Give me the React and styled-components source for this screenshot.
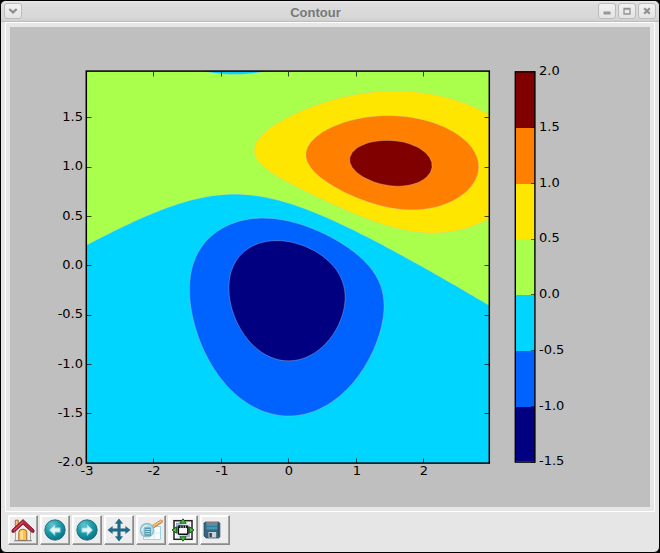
import React from "react";
import styled, { createGlobalStyle, css } from "styled-components";

const GlobalStyle = createGlobalStyle`
  * { box-sizing: border-box; }
  html, body { margin: 0; padding: 0; background: #000; overflow: hidden; }
`;

const Window = styled.main`
  width: 660px;
  height: 553px;
  display: flex;
  flex-direction: column;
  border: 1px solid #000;
  border-radius: 6px;
  overflow: hidden;
  background: #e6e6e6;
`;

const TitleBar = styled.header`
  height: 21px;
  flex: none;
  display: grid;
  grid-template-columns: 32px 1fr 62px;
  align-items: start;
  padding: 2px 3px 0;
  background: linear-gradient(#ece6ea 0, #dcdcdc 3px, #d8d8d8 16px, #cfcfcf 20px, #bdbdbd 20px);
`;

const Title = styled.h1`
  margin: 0;
  font: bold 13px/17px "Liberation Sans", sans-serif;
  color: #787878;
  text-align: center;
  padding-left: 1px;
  padding-top: 1px;
`;

const ControlGroup = styled.div`
  display: flex;
  gap: 2px;
  justify-content: ${(p) => (p.$end ? "flex-end" : "flex-start")};
`;

const ControlButton = styled.button`
  width: 18px;
  height: 16px;
  padding: 0;
  display: grid;
  place-items: center;
  border: 1px solid #bcbcbc;
  border-radius: 3px;
  background: linear-gradient(#f1f1f1, #e4e4e4);
  svg { display: block; }
`;

const CanvasFrame = styled.section`
  width: 650px;
  height: 490px;
  flex: none;
  margin-left: 4px;
  padding: 4px;
  border: 1px solid #fff;
`;

const Figure = styled.svg`
  display: block;
  background: #bfbfbf;
  font: 13px "DejaVu Sans", sans-serif;
`;

const Toolbar = styled.nav`
  display: flex;
  gap: 2px;
  padding: 3px 7px;
`;

const ToolButton = styled.button`
  width: 30px;
  height: 30px;
  padding: 0;
  display: grid;
  place-items: center;
  border: 1px solid;
  border-color: #fff #8a8a8a #8a8a8a #fff;
  box-shadow: inset -1px -1px #a4a4a4, inset 1px 1px #fff;
  background: #ededed;
  ${(p) => p.$light && css`background: #f7f7f7;`}
  svg { display: block; }
`;

/* ---------- contour data ---------- */

const gaussian = (x, y, sx, sy, mx, my) =>
  Math.exp(-0.5 * (((x - mx) / sx) ** 2 + ((y - my) / sy) ** 2)) / (2 * Math.PI * sx * sy);

const field = (x, y) => 10 * (gaussian(x, y, 1.5, 0.5, 1, 1) - gaussian(x, y, 1, 1, 0, 0));

const PLOT = { left: 76.3, right: 479.3, top: 44.1, bottom: 436.1 };
const X_SCALE = (PLOT.right - PLOT.left) / 5.975;
const Y_SCALE = (PLOT.bottom - PLOT.top) / 3.975;
const px = (x) => PLOT.left + (x + 3) * X_SCALE;
const py = (y) => PLOT.bottom - (y + 2) * Y_SCALE;

const STEP = 0.05;
const X0 = -3.2;
const Y0 = -2.2;
const COLS = 129;
const ROWS = 89;

const grid = Array.from({ length: ROWS }, (_, j) =>
  Array.from({ length: COLS }, (_, i) =>
    i === 0 || j === 0 || i === COLS - 1 || j === ROWS - 1
      ? -99
      : field(X0 + i * STEP, Y0 + j * STEP)
  )
);

// Traces the closed outlines of the region where the field exceeds the level.
function regionPath(level) {
  const points = new Map();
  const links = new Map();
  const crossing = (i1, j1, i2, j2) => {
    const key = `${i1 + i2},${j1 + j2}`;
    if (!points.has(key)) {
      const a = grid[j1][i1];
      const b = grid[j2][i2];
      const t = (level - a) / (b - a);
      points.set(key, [
        px(X0 + (i1 + (i2 - i1) * t) * STEP),
        py(Y0 + (j1 + (j2 - j1) * t) * STEP),
      ]);
      links.set(key, []);
    }
    return key;
  };
  for (let j = 0; j < ROWS - 1; j++) {
    for (let i = 0; i < COLS - 1; i++) {
      const corners = [[i, j], [i + 1, j], [i + 1, j + 1], [i, j + 1]];
      const hits = [];
      corners.forEach((c, k) => {
        const d = corners[(k + 1) % 4];
        if (grid[c[1]][c[0]] > level !== grid[d[1]][d[0]] > level) {
          hits.push(crossing(c[0], c[1], d[0], d[1]));
        }
      });
      for (let k = 0; k < hits.length; k += 2) {
        links.get(hits[k]).push(hits[k + 1]);
        links.get(hits[k + 1]).push(hits[k]);
      }
    }
  }
  const seen = new Set();
  let d = "";
  for (const start of points.keys()) {
    if (seen.has(start)) continue;
    const loop = [];
    let key = start;
    while (key) {
      seen.add(key);
      loop.push(points.get(key).map((v) => v.toFixed(2)).join(" "));
      key = links.get(key).find((n) => !seen.has(n));
    }
    d += `M${loop.join("L")}Z`;
  }
  return d;
}

const COLORS = ["#000080", "#0063ff", "#00d5ff", "#aaff4d", "#ffe600", "#ff8000", "#800000"];
const LAYERS = [-1, -0.5, 0, 0.5, 1, 1.5].map((level, k) => ({
  d: regionPath(level),
  color: COLORS[k + 1],
}));

const X_TICKS = [-3, -2, -1, 0, 1, 2];
const Y_TICKS = [-2, -1.5, -1, -0.5, 0, 0.5, 1, 1.5];
const BAR_TICKS = [-1.5, -1, -0.5, 0, 0.5, 1, 1.5, 2];
const BAR = { x: 505.3, top: 44.8, width: 19.6, step: 55.76 };

function ContourFigure() {
  const width = PLOT.right - PLOT.left;
  const height = PLOT.bottom - PLOT.top;
  return (
    <Figure width="640" height="480" viewBox="0 0 640 480" role="img" aria-label="Contour">
      <clipPath id="axes">
        <rect x={PLOT.left} y={PLOT.top} width={width} height={height} />
      </clipPath>
      <g clipPath="url(#axes)">
        <rect x={PLOT.left} y={PLOT.top} width={width} height={height} fill={COLORS[0]} />
        {LAYERS.map(({ d, color }) => (
          <path key={color} d={d} fill={color} fillRule="evenodd" stroke="#c8c8c8" strokeOpacity=".5" strokeWidth=".7" />
        ))}
      </g>
      <g stroke="#000" strokeOpacity=".7" strokeWidth="1">
        {X_TICKS.slice(1).map((v) => {
          const x = Math.floor(px(v)) + 0.5;
          return <path key={v} d={`M${x} 45v4.5M${x} 436v-4.5`} />;
        })}
        {Y_TICKS.slice(1).map((v) => {
          const y = Math.floor(py(v)) + 0.5;
          return <path key={v} d={`M77 ${y}h4.5M479 ${y}h-4.5`} />;
        })}
      </g>
      <rect x={PLOT.left} y={PLOT.top} width={width} height={height} fill="none" stroke="#000" strokeWidth="1.5" />
      {X_TICKS.map((v) => (
        <text key={v} x={Math.floor(px(v)) + 1} y="448" textAnchor="middle">{v}</text>
      ))}
      {Y_TICKS.map((v) => (
        <text key={v} x="73" y={Math.round(py(v) + 3.2)} textAnchor="end">{v.toFixed(1)}</text>
      ))}
      {COLORS.map((color, k) => (
        <rect
          key={color}
          x={BAR.x}
          y={Math.round(BAR.top + (6 - k) * BAR.step)}
          width={BAR.width}
          height={k ? 56 : 55.5}
          fill={color}
        />
      ))}
      <rect x={BAR.x} y={BAR.top} width={BAR.width} height={BAR.step * 7} fill="none" stroke="#000" strokeWidth="1.4" />
      {BAR_TICKS.map((v, k) => {
        const y = BAR.top + (7 - k) * BAR.step;
        return (
          <g key={v}>
            <path d={`M525 ${Math.floor(y) + 0.5}h-4`} stroke="#000" strokeOpacity=".6" />
            <text x="529" y={Math.round(y + 3.3)}>{v.toFixed(1)}</text>
          </g>
        );
      })}
    </Figure>
  );
}

/* ---------- toolbar icons ---------- */

const HomeIcon = () => (
  <svg width="24" height="24" viewBox="0 0 24 24">
    <path d="M4.5 11.5 12 5l7.5 6.5v11h-15z" fill="#f1ede6" stroke="#8f8f8f" strokeWidth=".8" />
    <path d="M4.3 2.2h3v6l-3 2.6z" fill="#f1c65e" stroke="#a5502d" strokeWidth=".8" />
    <path d="M7.8 22.5v-8q0-3.3 4-3.3t4 3.3v8z" fill="#ffc04a" stroke="#a0683a" />
    <path d="M9.5 21v-6.4q.2-2 2.3-2v8.4z" fill="#ffe49a" />
    <path d="M1 12 12 1.6 23 12v2.2h-2.2L12 6.2l-8.8 8H1z" fill="#b92543" stroke="#6e1429" strokeWidth=".9" />
    <path d="m3 12.2 9-8.4" stroke="#da5a70" />
    <path d="M3 22.8h18" stroke="#808080" />
  </svg>
);

const ArrowIcon = ({ right }) => (
  <svg width="24" height="24" viewBox="0 0 24 24">
    <defs>
      <radialGradient id={right ? "orbR" : "orbL"} cx=".35" cy=".25" r=".8">
        <stop offset="0" stopColor="#62c2cd" />
        <stop offset=".5" stopColor="#1c9bad" />
        <stop offset="1" stopColor="#087286" />
      </radialGradient>
    </defs>
    <circle cx="12" cy="12" r="10.2" fill={`url(#${right ? "orbR" : "orbL"})`} stroke="#16616f" strokeWidth=".8" />
    <path
      d="M6.3 12 12 6.5v3.3h5.2v4.4H12v3.3z"
      transform={right ? "rotate(180 12 12)" : undefined}
      fill="#dff4f5"
      stroke="#79c6d0"
      strokeWidth=".8"
    />
  </svg>
);

const PanIcon = () => (
  <svg width="24" height="24" viewBox="0 0 24 24">
    <path
      d="M12 .8 15.6 5.4h-2.3v5.3h5.3V8.4l4.6 3.6-4.6 3.6v-2.3h-5.3v5.3h2.3L12 23.2l-3.6-4.6h2.3v-5.3H5.4v2.3L.8 12l4.6-3.6v2.3h5.3V5.4H8.4z"
      fill="#1e6b8d"
      stroke="#13506e"
      strokeWidth=".4"
    />
  </svg>
);

const ZoomIcon = () => (
  <svg width="26" height="24" viewBox="0 0 26 24">
    <path d="M5.5 8.5h17v13h-17z" fill="#f8fcfe" stroke="#9bd4e5" />
    <path d="M16 9v12M6 15h16" stroke="#d3edf4" />
    <path d="m13.8 7.8 8.8-5.6q2-.6 2 1.8l-8.9 6z" fill="#eda04c" stroke="#b9793f" strokeWidth=".8" />
    <path d="m15.5 7.5 8-4.7" stroke="#ffd493" />
    <circle cx="9" cy="12.2" r="6.7" fill="#b5dbe5" stroke="#8fc0cc" strokeWidth="1.4" />
    <path d="M6.5 9.5h6.3v8.2H6.5z" fill="#4c93aa" />
    <path d="M7.3 11.4h4.7M7.3 13.6h4.7M7.3 15.8h4.7" stroke="#d5edf2" strokeWidth=".9" />
    <path d="M4 13q0-5 5-5.5" fill="none" stroke="#eef9fa" />
  </svg>
);

const SubplotsIcon = () => (
  <svg width="24" height="24" viewBox="0 0 24 24">
    <defs>
      <linearGradient id="plate" x1="0" y1="0" x2="1" y2="1">
        <stop offset="0" stopColor="#7e9ec4" />
        <stop offset=".45" stopColor="#edf3fb" />
        <stop offset="1" stopColor="#92a5bd" />
      </linearGradient>
    </defs>
    <rect x="3" y="2.7" width="18" height="18.6" fill="#fff" stroke="#222" strokeWidth="1.5" />
    <rect x="5" y="4.7" width="14" height="14.6" fill="url(#plate)" />
    <rect x="7.3" y="8" width="9.6" height="8.2" rx="1" fill="#f7f7f7" stroke="#0c0c0c" strokeWidth="1.6" />
    <path d="M7.5 8h9.2v2H7.5z" fill="#111" />
    <path d="M9.8 7.5v3M12.2 7.5v3M14.6 7.5v3" stroke="#ccc" strokeWidth=".8" />
    <path
      d="m12 .8 3.2 4.4H8.8zM12 23.2l3.2-4.4H8.8zM5.4 8.8v6.4L1 12zM18.6 8.8v6.4L23 12z"
      fill="#42c735"
      stroke="#124d15"
      strokeWidth=".9"
    />
  </svg>
);

const SaveIcon = () => (
  <svg width="24" height="24" viewBox="0 0 24 24">
    <path d="M1 5.2 2.2 4h13.5l1.2 1.2V19l-1.2 1H3l-2-2z" fill="#37657f" stroke="#284a60" strokeWidth=".7" />
    <path d="M3.5 4.3h10.8v7.2H3.5z" fill="#4597b5" />
    <path d="M3.5 4.3h10.8v2H3.5z" fill="#a0766f" />
    <path d="M3.5 8.5h10.8" stroke="#287b99" />
    <path d="M5.5 14h7.7v5.5H5.5z" fill="#c9d1d6" />
    <path d="M6.5 15h2.3v4H6.5z" fill="#263b50" />
    <path d="M15.4 6v12" stroke="#284f67" />
  </svg>
);

const TOOLS = [
  { name: "Home", icon: <HomeIcon /> },
  { name: "Back", icon: <ArrowIcon /> },
  { name: "Forward", icon: <ArrowIcon right /> },
  { name: "Pan", icon: <PanIcon /> },
  { name: "Zoom", icon: <ZoomIcon /> },
  { name: "Subplots", icon: <SubplotsIcon />, light: true },
  { name: "Save", icon: <SaveIcon /> },
];

export default function App() {
  return (
    <>
      <GlobalStyle />
      <Window>
        <TitleBar>
          <ControlGroup>
            <ControlButton aria-label="Window menu">
              <svg width="10" height="8" viewBox="0 0 10 8">
                <path d="m1.3 2 3.7 3.4L8.7 2" fill="none" stroke="#8d8d8d" strokeWidth="2.2" />
              </svg>
            </ControlButton>
          </ControlGroup>
          <Title>Contour</Title>
          <ControlGroup $end>
            <ControlButton aria-label="Minimize">
              <svg width="8" height="8" viewBox="0 0 8 8">
                <path d="M.5 4.5h7v3h-7z" fill="#969696" />
              </svg>
            </ControlButton>
            <ControlButton aria-label="Maximize">
              <svg width="8" height="8" viewBox="0 0 8 8">
                <path d="M1 1.5h6v5.5H1zM.5 2h7" fill="none" stroke="#929292" strokeWidth="1.3" />
              </svg>
            </ControlButton>
            <ControlButton aria-label="Close">
              <svg width="8" height="8" viewBox="0 0 8 8">
                <path d="m1.2 1.2 5.6 5.6m0-5.6L1.2 6.8" stroke="#909090" strokeWidth="2.2" />
              </svg>
            </ControlButton>
          </ControlGroup>
        </TitleBar>
        <CanvasFrame>
          <ContourFigure />
        </CanvasFrame>
        <Toolbar>
          {TOOLS.map((tool) => (
            <ToolButton key={tool.name} aria-label={tool.name} $light={tool.light}>
              {tool.icon}
            </ToolButton>
          ))}
        </Toolbar>
      </Window>
    </>
  );
}
